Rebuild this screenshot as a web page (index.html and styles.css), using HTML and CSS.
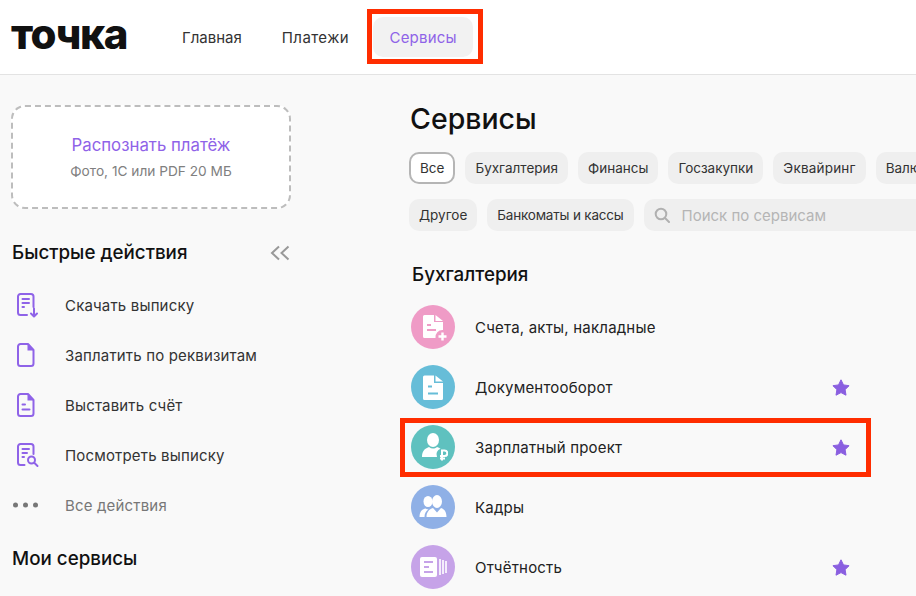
FILE: index.html
```html
<!DOCTYPE html>
<html lang="ru">
<head>
<meta charset="utf-8">
<title>Точка — Сервисы</title>
<link rel="stylesheet" href="styles.css">
</head>
<body>
<header class="header">
  <div class="logo">точка</div>
  <nav class="nav">
    <a class="tab home">Главная</a>
    <a class="tab pay">Платежи</a>
    <a class="tab active">Сервисы</a>
  </nav>
</header>
<div class="page">
  <aside class="side">
    <div class="drop">
      <div class="drop-title">Распознать платёж</div>
      <div class="drop-sub">Фото, 1С или PDF 20 МБ</div>
    </div>
    <div class="side-head">
      <h2 class="h2">Быстрые действия</h2>
      <svg class="collapse" width="20" height="16" viewBox="0 0 20 16"><path d="M9 1.500 2 8l7 6.500M18.500 1.500 11.500 8l7 6.500" fill="none" stroke="#999" stroke-width="2"/></svg>
    </div>
    <ul class="actions">
      <li class="action">
        <svg class="aicon" width="24" height="26" viewBox="0 0 24 26"><g fill="none" stroke="#8f63e8" stroke-width="2" stroke-linecap="round" stroke-linejoin="round"><path d="M12 23H5.500A2.500 2.500 0 0 1 3 20.500v-16A2.500 2.500 0 0 1 5.500 2H16a2.500 2.500 0 0 1 2.500 2.500V15"/><path d="M7.500 7h6.500M7.500 11h6.500M7.500 15h1.500M19 16.500V24M16 21.500l3 3 3-3"/></g></svg>
        <span>Скачать выписку</span>
      </li>
      <li class="action">
        <svg class="aicon" width="24" height="26" viewBox="0 0 24 26"><path d="M13 2H5.500A2.500 2.500 0 0 0 3 4.500v17A2.500 2.500 0 0 0 5.500 24H16a2.500 2.500 0 0 0 2.500-2.500V8z" fill="none" stroke="#8f63e8" stroke-width="2" stroke-linejoin="round"/><path d="M12.500 2v6.500h6z" fill="#8f63e8"/></svg>
        <span>Заплатить по реквизитам</span>
      </li>
      <li class="action">
        <svg class="aicon" width="24" height="26" viewBox="0 0 24 26"><path d="M13 2H5.500A2.500 2.500 0 0 0 3 4.500v17A2.500 2.500 0 0 0 5.500 24H16a2.500 2.500 0 0 0 2.500-2.500V8z" fill="none" stroke="#8f63e8" stroke-width="2" stroke-linejoin="round"/><path d="M12.500 2v6.500h6z" fill="#8f63e8"/><path d="M7.500 12.500h2.500M7.500 17.500h7" stroke="#8f63e8" stroke-width="2" stroke-linecap="round"/></svg>
        <span>Выставить счёт</span>
      </li>
      <li class="action">
        <svg class="aicon" width="24" height="26" viewBox="0 0 24 26"><g fill="none" stroke="#8f63e8" stroke-width="2" stroke-linecap="round" stroke-linejoin="round"><path d="M9.500 23h-4A2.500 2.500 0 0 1 3 20.500v-16A2.500 2.500 0 0 1 5.500 2H16a2.500 2.500 0 0 1 2.500 2.500V12"/><path d="M7.500 7h6.500M7.500 11h4.500M7.500 15h1.500"/><circle cx="16.500" cy="18" r="3.500"/><path d="m19.500 21 3 3"/></g></svg>
        <span>Посмотреть выписку</span>
      </li>
      <li class="action muted">
        <svg class="aicon dots" width="28" height="8" viewBox="0 0 28 8"><g fill="#777"><circle cx="3.500" cy="4" r="2.500"/><circle cx="13.500" cy="4" r="2.500"/><circle cx="23.500" cy="4" r="2.500"/></g></svg>
        <span>Все действия</span>
      </li>
    </ul>
    <h2 class="h2 my">Мои сервисы</h2>
  </aside>
  <main class="main">
    <h1 class="h1">Сервисы</h1>
    <div class="chips">
      <span class="chip selected">Все</span>
      <span class="chip">Бухгалтерия</span>
      <span class="chip">Финансы</span>
      <span class="chip">Госзакупки</span>
      <span class="chip wide">Эквайринг</span>
      <span class="chip">Валюта</span>
    </div>
    <div class="chips second">
      <span class="chip">Другое</span>
      <span class="chip tight">Банкоматы и кассы</span>
      <div class="search">
        <svg width="16" height="16" viewBox="0 0 16 16"><circle cx="7" cy="7" r="5.300" fill="none" stroke="#b0b0b0" stroke-width="2"/><path d="m11 11 4 4" stroke="#b0b0b0" stroke-width="2" stroke-linecap="round"/></svg>
        <span>Поиск по сервисам</span>
      </div>
    </div>
    <h2 class="h2 group">Бухгалтерия</h2>
    <ul class="services">
      <li class="service">
        <span class="circle pink">
          <svg width="30" height="30" viewBox="0 0 30 30"><path d="M5 4.500A1.500 1.500 0 0 1 6.500 3H16v7h9v8a7 7 0 0 0-7.500 8h-11A1.500 1.500 0 0 1 5 24.500z" fill="#fff"/><path d="M17.500 3l7.500 6h-7.500z" fill="#fff"/><path d="M9 13h4M9 18h9" stroke="#ef9bc6" stroke-width="2"/><path d="M24.500 20.500v8M20.500 24.500h8" stroke="#fff" stroke-width="2.400"/></svg>
        </span>
        <span class="name">Счета, акты, накладные</span>
      </li>
      <li class="service">
        <span class="circle blue">
          <svg width="30" height="30" viewBox="0 0 30 30"><path d="M5 5A1.500 1.500 0 0 1 6.500 3.500H16V11h9v15.500a1.500 1.500 0 0 1-1.500 1.500h-17A1.500 1.500 0 0 1 5 26.500z" fill="#fff"/><path d="M17.500 3.500l7.500 6h-7.500z" fill="#fff"/><path d="M10 14.500h4M10 21.500h10" stroke="#66bdd8" stroke-width="2"/></svg>
        </span>
        <span class="name">Документооборот</span>
        <svg class="star" width="18" height="17" viewBox="0 0 18 17"><use href="#star"/></svg>
      </li>
      <li class="service">
        <span class="circle teal">
          <svg width="30" height="30" viewBox="0 0 30 30"><ellipse cx="15" cy="8" rx="6" ry="7" fill="#fff"/><path d="M4 25c0-5.500 2.500-8.500 7-10 2.500 2 5.500 2 8 0 1.500.4 2.500 1 3.500 1.800a6 6 0 0 0-3.500 8.200z" fill="#fff"/><path d="M24 28.500V18.500h2.500a2.800 2.800 0 0 1 0 5.600H22M22 26.500h5" fill="none" stroke="#fff" stroke-width="2"/></svg>
        </span>
        <span class="name">Зарплатный проект</span>
        <svg class="star" width="18" height="17" viewBox="0 0 18 17"><use href="#star"/></svg>
      </li>
      <li class="service">
        <span class="circle periwinkle">
          <svg width="30" height="30" viewBox="0 0 30 30"><ellipse cx="10" cy="9.500" rx="4.500" ry="5.500" fill="#fff"/><ellipse cx="19" cy="9.500" rx="5" ry="6.500" fill="#fff"/><path d="M1.500 25c0-5 2-7.500 6-8.500 1 .6 2 1 3 1-2.500 1.500-4 4-4 7.500z" fill="#fff"/><path d="M8.500 25c0-4.500 2.500-8 6.500-9l4 4.500 4-4.500c3.500 1 5.500 4 5.500 9z" fill="#fff"/></svg>
        </span>
        <span class="name">Кадры</span>
      </li>
      <li class="service">
        <span class="circle lilac">
          <svg width="30" height="30" viewBox="0 0 30 30"><rect x="2" y="5" width="17" height="20" rx="2" fill="#fff"/><path d="M6 10h9M6 15h5M6 20h9" stroke="#c6a3e8" stroke-width="2"/><path d="M22 7v16M25 8v14M28 9v12" stroke="#fff" stroke-width="1.600"/></svg>
        </span>
        <span class="name">Отчётность</span>
        <svg class="star" width="18" height="17" viewBox="0 0 18 17"><use href="#star"/></svg>
      </li>
    </ul>
  </main>
</div>
<div class="mark mark-tab"></div>
<div class="mark mark-row"></div>
<svg class="defs" width="0" height="0"><defs><path id="star" d="M9 .8l2.500 5.100 5.600.8-4 3.900.9 5.600L9 13.600l-5 2.600.9-5.600-4-3.900 5.600-.8z" fill="#8a5fe0" stroke="#8a5fe0" stroke-width="1" stroke-linejoin="round"/></defs></svg>
</body>
</html>
```
FILE: styles.css
```css
* { box-sizing: border-box; }
html, body { margin: 0; height: 596px; overflow: hidden; }
body { position: relative; background: #f9f9f9; font-family: Inter, "Noto Sans", sans-serif; color: #222; }
ul { list-style: none; margin: 0; padding: 0; }
h1, h2 { margin: 0; }

.header { display: flex; align-items: center; height: 75px; padding-left: 11px; background: #fff; border-bottom: 1px solid #e3e3e3; }
.logo { width: 155px; font-size: 42px; line-height: 70px; font-weight: 800; letter-spacing: -1.400px; color: #111; position: relative; top: -3px; }
.nav { display: flex; gap: 8px; }
.tab { display: block; height: 40px; padding: 0 16px; border-radius: 10px; font-size: 15px; line-height: 42px; letter-spacing: .2px; color: #333; }
.tab.home { letter-spacing: 0; }
.tab.pay { letter-spacing: .4px; }
.tab.active { margin-left: .500px; background: #f2f2f2; color: #8f63e8; }

.page { display: grid; grid-template-columns: 409px 1fr; }
.side { padding: 30px 0 0 11px; }
.drop { display: flex; flex-direction: column; align-items: center; justify-content: center; width: 280px; height: 104px; background: #fff; border: 2px dashed #bdbdbd; border-radius: 14px; }
.drop-title { font-size: 16.800px; line-height: 24px; color: #8f63e8; }
.drop-sub { font-size: 13.700px; line-height: 20px; margin-top: 4px; color: #808080; }
.side-head { display: flex; align-items: center; justify-content: space-between; width: 279px; margin-top: 32px; padding-left: 1px; }
.h2 { font-size: 18.800px; line-height: 24px; font-weight: 500; color: #111; }
.actions { margin-top: 15px; }
.action { display: flex; align-items: center; height: 50px; padding-left: 4px; font-size: 15px; letter-spacing: .17px; color: #333; }
.aicon { width: 24px; margin-right: 26px; flex: none; }
.aicon.dots { margin-left: -3px; margin-right: 25px; width: 28px; }
.muted { color: #777; }
.my { margin-top: 17px; padding-left: 1px; }

.main { padding-top: 29px; min-width: 0; overflow: hidden; }
.h1 { font-size: 28.500px; line-height: 30px; font-weight: 500; padding-left: 1px; color: #111; }
.chips { display: flex; gap: 10px; margin-top: 18px; white-space: nowrap; }
.chips.second { margin-top: 15px; }
.chip { flex: none; height: 32px; padding: 0 10px; border-radius: 10px; background: #efefef; font-size: 13.500px; line-height: 32px; color: #333; }
.chip.selected { background: #fff; border: 2px solid #b5b5b5; line-height: 28px; padding: 0 9px; }
.chip.tight { letter-spacing: -.2px; }
.chip.wide { letter-spacing: .2px; }
.search { flex: none; display: flex; align-items: center; gap: 12px; width: 300px; height: 32px; padding-left: 10px; border-radius: 10px; background: #efefef; font-size: 15px; color: #b5b5b5; }
.group { margin-top: 32px; padding-left: 3px; }
.services { margin-top: 10px; }
.service { display: flex; align-items: center; height: 60px; padding-left: 2px; }
.circle { display: flex; align-items: center; justify-content: center; width: 44px; height: 44px; border-radius: 50%; flex: none; }
.pink { background: #ef9bc6; }
.blue { background: #66bdd8; }
.teal { background: #5fc1bf; }
.periwinkle { background: #8fb0e6; }
.lilac { background: #c6a3e8; }
.name { margin-left: 20px; width: 357px; font-size: 15px; letter-spacing: .2px; color: #222; }
.star { flex: none; }

.mark { position: absolute; border: 5px solid #ff2d00; pointer-events: none; }
.mark-tab { left: 367px; top: 9px; width: 116px; height: 55px; }
.mark-row { left: 400px; top: 418px; width: 471px; height: 59px; }
.defs { position: absolute; }
```
